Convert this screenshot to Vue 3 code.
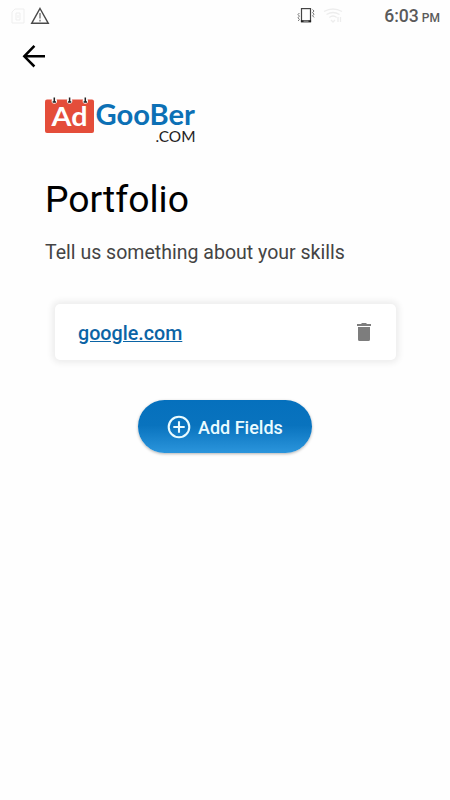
<template>
  <div class="screen">
    <header class="status-bar">
      <div class="status-left">
        <svg width="14" height="16" viewBox="0 0 14 16" fill="none" stroke="#eeeeee">
          <path d="M4 1h9v14H1V4z" />
          <path d="M5 5h4v7H5zM7 7v3" />
        </svg>
        <svg width="20" height="18" viewBox="0 0 20 18" fill="none" stroke="#4a4a4a" stroke-width="1.4">
          <path d="M10 1.500L18.300 16.300H1.700z" />
          <path d="M10 6v5.500M10 12.800v1.700" stroke="#777" stroke-width="1.4" />
        </svg>
      </div>
      <div class="status-right">
        <svg width="18" height="18" viewBox="0 0 18 18" fill="none">
          <rect x="4.500" y="1.600" width="9" height="12.800" stroke="#444" stroke-width="1.2" />
          <path d="M3.900 14.300h10.200" stroke="#222" stroke-width="2.2" />
          <path d="M6.500 14.200h5" stroke="#ccc" stroke-width="0.8" />
          <path d="M2.400 6L1 7.500l1.400 1.600L1 10.800l1.400 1.600L1.200 14M15.600 2.500L17 4l-1.400 1.600L17 7.200l-1.400 1.600L17 10.400" stroke="#666" stroke-width="0.9" />
        </svg>
        <svg class="wifi" width="20" height="17" viewBox="0 0 20 17" fill="none" stroke="#ededed" stroke-width="1.3">
          <path d="M1 3.500q9-5 18 0M3.500 6.500q6.500-4 13 0M6.300 9.500q3.700-3 7.400 0M8 12l2 2 2-2M15 9v5M17.500 9v5" />
        </svg>
        <span class="clock">6:03</span>
        <span class="meridiem">PM</span>
      </div>
    </header>

    <nav class="toolbar">
      <button class="back-btn" aria-label="Back">
        <svg width="24" height="24" viewBox="0 0 24 24" fill="none" stroke="#000" stroke-width="2.5">
          <path d="M23 12.300H2.500M12.400 1.800L2.300 12.300l10.100 10.200" />
        </svg>
      </button>
    </nav>

    <main class="content">
      <svg class="logo" width="152" height="50" viewBox="0 0 152 50">
        <rect x="0" y="2.500" width="49" height="33.500" rx="2" fill="#e44d3a" />
        <g v-for="x in [9.300, 24.600, 40.300]" :key="x">
          <circle :cx="x" cy="4" r="2.700" fill="#fff" />
          <path :d="`M${x} 0.500v4M${x - 1.700} 5h3.400`" stroke="#222" stroke-width="1.500" />
        </g>
        <text x="6.500" y="28.500" class="logo-ad" textLength="36" lengthAdjust="spacingAndGlyphs">Ad</text>
        <text x="50.500" y="28" class="logo-name" textLength="99.500" lengthAdjust="spacingAndGlyphs">GooBer</text>
        <text x="110.500" y="45.300" class="logo-com" textLength="40" lengthAdjust="spacingAndGlyphs">.COM</text>
      </svg>

      <h1>Portfolio</h1>
      <p class="subtitle">Tell us something about your skills</p>

      <div v-for="link in links" :key="link" class="link-card">
        <a class="link">{{ link }}</a>
        <button class="delete-btn" aria-label="Delete" @click="removeLink(link)">
          <svg width="14" height="18" viewBox="0 0 14 18" fill="#7d7d7d">
            <path d="M0 1h4l1-1h4l1 1h4v2H0zM1 4h12v12.500q0 1.500-1.500 1.500H2.500q-1.500 0-1.500-1.500z" />
          </svg>
        </button>
      </div>

      <button class="add-btn">
        <svg width="24" height="24" viewBox="0 0 24 24" fill="none" stroke="#e9fbff" stroke-width="2.1">
          <circle cx="12" cy="12" r="10.300" />
          <path d="M12 6.300v11.400M6.300 12h11.400" />
        </svg>
        <span>Add Fields</span>
      </button>
    </main>
  </div>
</template>

<script setup>
import { ref } from 'vue';

const links = ref(['google.com']);

function removeLink(link) {
  links.value = links.value.filter((item) => item !== link);
}
</script>

<style>
body {
  background: #fefefe;
}
</style>

<style scoped>
.screen {
  min-height: 800px;
  background: #fefefe;
  font-family: Roboto, sans-serif;
}

.status-bar {
  display: flex;
  justify-content: space-between;
  height: 32px;
  padding: 0 10px 0 11px;
}

.status-left,
.status-right {
  display: flex;
  align-items: center;
}

.status-left {
  gap: 5px;
}

.wifi {
  margin-left: 8px;
}

.clock {
  margin-left: 41px;
  font-size: 17.6px;
  font-weight: 500;
  line-height: 32px;
  color: #5a5a5a;
}

.meridiem {
  margin-left: 3px;
  padding-top: 4px;
  font-size: 12px;
  font-weight: 500;
  color: #5a5a5a;
}

button {
  padding: 0;
  border: none;
  background: none;
  font-family: inherit;
  cursor: pointer;
}

svg {
  display: block;
}

.toolbar {
  height: 48px;
  padding: 12px 0 0 22px;
  box-sizing: border-box;
}

.content {
  display: flex;
  flex-direction: column;
  padding: 17px 45px 0;
}

.logo-ad {
  font: 700 26px Lato, sans-serif;
  fill: #fff;
}

.logo-name {
  font: 700 28px Lato, sans-serif;
  fill: #0c70b5;
}

.logo-com {
  font: 400 14.5px Lato, sans-serif;
  fill: #222;
}

h1 {
  margin: 29px 0 0;
  font-size: 37.3px;
  font-weight: 400;
  line-height: 46px;
  color: #000;
}

.subtitle {
  margin: 19px 0 0;
  font-size: 19.55px;
  line-height: 24px;
  color: #444;
}

.link-card {
  display: flex;
  align-items: center;
  justify-content: space-between;
  height: 56px;
  margin: 39px 9px 0 10px;
  padding: 0 25px 0 23px;
  box-sizing: border-box;
  border-radius: 5px;
  background: #fff;
  box-shadow: 0 0 6px 3px rgba(0, 0, 0, 0.07);
}

.link {
  font-size: 19.7px;
  font-weight: 500;
  line-height: 24px;
  padding-top: 4px;
  color: #0b64a5;
  text-decoration: underline;
}

.add-btn {
  display: flex;
  align-items: center;
  gap: 7px;
  width: 174px;
  height: 53px;
  margin: 40px 0 0 93px;
  padding-left: 29px;
  border-radius: 27px;
  background: linear-gradient(#0570bd 0%, #0973be 48%, #2b95dc 100%);
  box-shadow: 0 1px 3px rgba(0, 0, 0, 0.3);
  font-size: 18px;
  font-weight: 500;
  color: #e9fbff;
  white-space: nowrap;
}

.add-btn span {
  padding-top: 1px;
}
</style>
